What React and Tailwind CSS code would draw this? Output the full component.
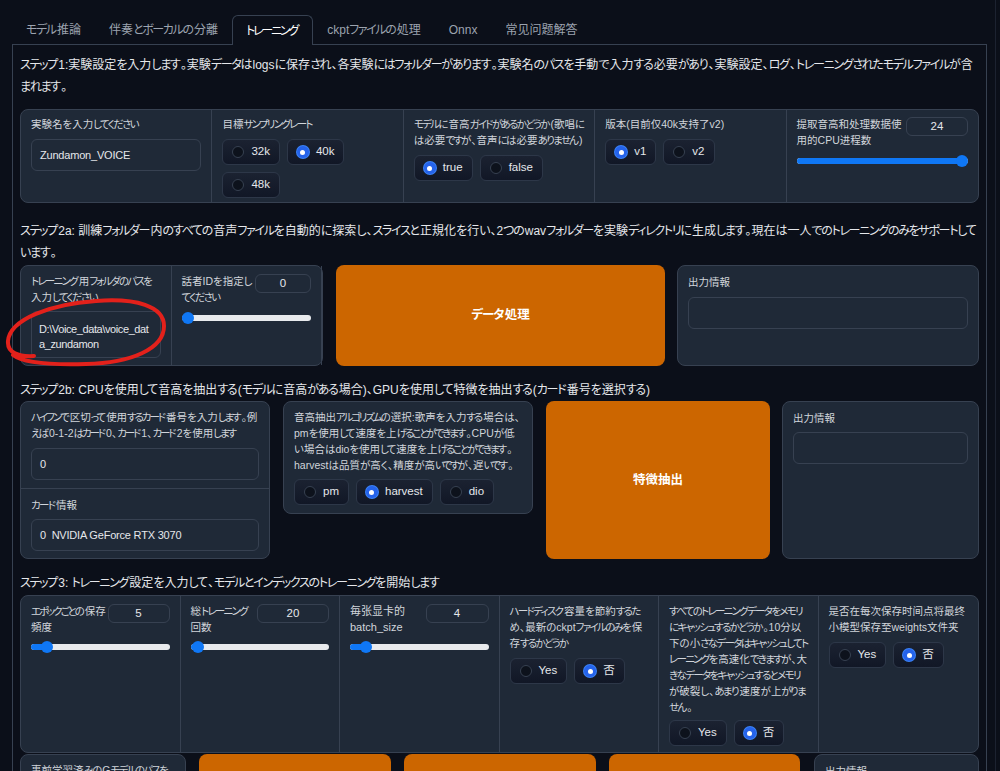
import React from "react";

const TABS = ["モデル推論", "伴奏とボーカルの分離", "トレーニング", "ckptファイルの処理", "Onnx", "常见问题解答"];

// kana runs get tighter spacing, like the narrow kana of the original UI font
const KANA = /([\u3040-\u30ff]+)/;
const jp = (text, cls) =>
  typeof text === "string"
    ? text.split(KANA).map((p, i) => (i % 2 === 1 ? <span key={i} className={cls}>{p}</span> : p))
    : text;

const Label = ({ children, className = "", kana = "tracking-[-1.7px] pr-[1.7px]" }) => (
  <div className={`text-[10.5px] leading-[16px] text-[#d1d5db] ${className}`}>{jp(children, kana)}</div>
);

const TIGHT = "tracking-[-2.1px] pr-[2.1px]";

const Radio = ({ label, checked }) => (
  <div className="flex items-center h-[26px] pl-[9px] pr-[9px] gap-[7px] rounded-[6px] border border-[#2d3748] bg-gradient-to-b from-[#1b2231] to-[#111726] text-[11.5px] text-[#e5e7eb]">
    {checked ? (
      <span className="w-[12px] h-[12px] rounded-full bg-[#2563eb] flex items-center justify-center shadow-[0_0_0_1px_#3b82f6]">
        <span className="w-[5px] h-[5px] rounded-full bg-white" />
      </span>
    ) : (
      <span className="w-[12px] h-[12px] rounded-full bg-[#0d121c] border border-[#374151]" />
    )}
    <span>{label}</span>
  </div>
);

const Slider = ({ pct }) => (
  <div className="relative h-[12px] flex items-center">
    <div className="w-full h-[6px] rounded-full bg-[#e8eaed] overflow-hidden">
      <div className="h-full bg-[#0f77f5]" style={{ width: `calc((100% - 12px) * ${pct / 100} + 6px)` }} />
    </div>
    <div
      className="absolute top-0 w-[12px] h-[12px] rounded-full bg-[#0f77f5]"
      style={{ left: `calc((100% - 12px) * ${pct / 100})` }}
    />
  </div>
);

const NumBox = ({ value, w = "w-[62px]" }) => (
  <div className={`${w} shrink-0 h-[19px] mt-[1px] rounded-[6px] border border-[#374151] text-[11.5px] flex items-center justify-center text-[#e5e7eb]`}>
    {value}
  </div>
);

const TextBox = ({ children, className = "h-[32px]" }) => (
  <div className={`${className} rounded-[6px] border border-[#374151] bg-[#1f2937] px-[8px] flex items-center text-[11px] tracking-[-0.2px] text-[#e5e7eb]`}>
    {children}
  </div>
);

const Panel = ({ children, className = "" }) => (
  <div className={`rounded-[8px] border border-[#374151] bg-[#1f2937] ${className}`}>{children}</div>
);

const OrangeButton = ({ children, className = "" }) => (
  <div className={`rounded-[8px] bg-[#cc6600] flex items-center justify-center text-white font-bold text-[12.5px] ${className}`}>
    {jp(children, "tracking-[-1px] pr-[1px]")}
  </div>
);

const StepText = ({ children, className = "" }) => (
  <div className={`text-[12px] leading-[22px] text-[#e5e7eb] ${className}`}>
    {jp(children, "tracking-[-1.3px] pr-[1.3px]")}
  </div>
);

export default function App() {
  return (
    <div className="min-h-screen w-full bg-[#0b0f19] font-['Liberation_Sans','Noto_Sans_CJK_JP',sans-serif] [font-feature-settings:'palt'] text-[#e5e7eb]">
      <div className="w-[996px] min-h-screen border-r border-[#1c2230] pt-[15px] pl-[12px] pr-[8px]">
        {/* tabs */}
        <div className="flex items-end h-[29px]">
          {TABS.map((t, i) =>
            i === 2 ? (
              <div
                key={t}
                className="relative z-10 -mb-px h-[30px] px-[13px] flex items-center rounded-t-[6px] border border-b-0 border-[#374151] bg-[#0b0f19] text-[12px] text-white"
              >
                {jp(t, "tracking-[-2.2px] pr-[2.2px]")}
              </div>
            ) : (
              <div key={t} className="h-[29px] px-[14px] flex items-center text-[12px] text-[#9ca3af]">
                {jp(t, "tracking-[-1.4px] pr-[1.4px]")}
              </div>
            )
          )}
        </div>

        <div className="border border-[#374151] px-[7px] pt-[9px] pb-[20px]">
          {/* Step 1 */}
          <StepText>
            ステップ1:実験設定を入力します。実験データはlogsに保存され、各実験にはフォルダーがあります。実験名のパスを手動で入力する必要があり、実験設定、ログ、トレーニングされたモデルファイルが含まれます。
          </StepText>
          <Panel className="mt-[11px] h-[94px] grid grid-cols-5 divide-x divide-[#374151]">
            <div className="px-[10px] pt-[6px]">
              <Label>実験名を入力してください</Label>
              <TextBox className="mt-[7px] h-[32px]">Zundamon_VOICE</TextBox>
            </div>
            <div className="px-[10px] pt-[6px]">
              <Label>目標サンプリングレート</Label>
              <div className="mt-[7px] flex flex-wrap gap-[7px]">
                <Radio label="32k" />
                <Radio label="40k" checked />
                <Radio label="48k" />
              </div>
            </div>
            <div className="px-[10px] pt-[6px]">
              <Label>モデルに音高ガイドがあるかどうか(歌唱には必要ですが、音声には必要ありません)</Label>
              <div className="mt-[7px] flex flex-wrap gap-[7px]">
                <Radio label="true" checked />
                <Radio label="false" />
              </div>
            </div>
            <div className="px-[10px] pt-[6px]">
              <Label>版本(目前仅40k支持了v2)</Label>
              <div className="mt-[7px] flex flex-wrap gap-[7px]">
                <Radio label="v1" checked />
                <Radio label="v2" />
              </div>
            </div>
            <div className="px-[10px] pt-[6px]">
              <div className="flex">
                <Label className="flex-1">提取音高和处理数据使用的CPU进程数</Label>
                <NumBox value="24" />
              </div>
              <div className="mt-[7px]">
                <Slider pct={100} />
              </div>
            </div>
          </Panel>

          {/* Step 2a */}
          <StepText className="mt-[17px]">
            ステップ2a: 訓練フォルダー内のすべての音声ファイルを自動的に探索し、スライスと正規化を行い、2つのwavフォルダーを実験ディレクトリに生成します。現在は一人でのトレーニングのみをサポートしています。
          </StepText>
          <div className="mt-[1px] flex h-[101px]">
            <Panel className="relative w-[303px] grid grid-cols-2 divide-x divide-[#374151]">
              <div className="px-[10px] pt-[7px]">
                <Label>トレーニング用フォルダのパスを入力してください</Label>
                <div className="mt-[6px] h-[47px] rounded-[6px] border border-[#374151] px-[7px] pt-[10px] text-[11px] tracking-[-0.4px] leading-[15px] text-[#e5e7eb] break-all">
                  D:\Voice_data\voice_data_zundamon
                </div>
              </div>
              <div className="px-[10px] pt-[7px]">
                <div className="flex gap-[4px]">
                  <Label className="flex-1">話者IDを指定してください</Label>
                  <NumBox value="0" w="w-[56px]" />
                </div>
                <div className="mt-[7px]">
                  <Slider pct={0} />
                </div>
              </div>
              {/* red hand-drawn annotation */}
              <svg
                className="absolute left-[-16px] top-[31px] pointer-events-none"
                width="166"
                height="72"
                viewBox="0 0 166 72"
                fill="none"
              >
                <path
                  d="M29 59 C14 60, 2 56, 3 44 C5 22, 46 7, 91 4 C131 1, 159 9, 159 29 C159 52, 126 66, 81 67 C46 68, 18 66, 8 58"
                  stroke="#e3211b"
                  strokeWidth="4"
                  strokeLinecap="round"
                />
              </svg>
            </Panel>
            <OrangeButton className="ml-[13px] w-[329px]">データ処理</OrangeButton>
            <Panel className="ml-[12px] flex-1 px-[10px] pt-[8px]">
              <Label>出力情報</Label>
              <TextBox className="mt-[7px] h-[32px]" />
            </Panel>
          </div>

          {/* Step 2b */}
          <StepText className="mt-[13px]">
            ステップ2b: CPUを使用して音高を抽出する(モデルに音高がある場合)、GPUを使用して特徴を抽出する(カード番号を選択する)
          </StepText>
          <div className="flex items-start h-[158px]">
            <Panel className="w-[250px] self-stretch">
              <div className="px-[10px] pt-[7px] pb-[8px] border-b border-[#374151]">
                <Label kana={TIGHT}>
                  ハイフンで区切って使用するカード番号を入力します。例えば0-1-2はカード0、カード1、カード2を使用します
                </Label>
                <TextBox className="mt-[7px] h-[32px]">0</TextBox>
              </div>
              <div className="px-[10px] pt-[8px]">
                <Label>カード情報</Label>
                <TextBox className="mt-[6px] h-[32px]">0&nbsp;&nbsp;NVIDIA GeForce RTX 3070</TextBox>
              </div>
            </Panel>
            <Panel className="ml-[13px] w-[250px] px-[10px] pt-[7px] pb-[8px]">
              <Label kana={TIGHT}>
                音高抽出アルゴリズムの選択:歌声を入力する場合は、pmを使用して速度を上げることができます。CPUが低い場合はdioを使用して速度を上げることができます。harvestは品質が高く、精度が高いですが、遅いです。
              </Label>
              <div className="mt-[6px] flex flex-wrap gap-[7px]">
                <Radio label="pm" />
                <Radio label="harvest" checked />
                <Radio label="dio" />
              </div>
            </Panel>
            <OrangeButton className="ml-[13px] w-[224px] self-stretch">特徴抽出</OrangeButton>
            <Panel className="ml-[12px] flex-1 self-stretch px-[10px] pt-[8px]">
              <Label>出力情報</Label>
              <TextBox className="mt-[6px] h-[32px]" />
            </Panel>
          </div>

          {/* Step 3 */}
          <StepText className="mt-[13px]">
            ステップ3: トレーニング設定を入力して、モデルとインデックスのトレーニングを開始します
          </StepText>
          <Panel className="mt-[1px] h-[158px] grid grid-cols-6 divide-x divide-[#374151]">
            <div className="px-[10px] pt-[7px]">
              <div className="flex">
                <Label className="flex-1" kana={TIGHT}>エポックごとの保存頻度</Label>
                <NumBox value="5" w="w-[62px]" />
              </div>
              <div className="mt-[6px]">
                <Slider pct={8} />
              </div>
            </div>
            <div className="px-[10px] pt-[7px]">
              <div className="flex">
                <Label className="flex-1">総トレーニング回数</Label>
                <NumBox value="20" w="w-[72px]" />
              </div>
              <div className="mt-[6px]">
                <Slider pct={1} />
              </div>
            </div>
            <div className="px-[10px] pt-[7px]">
              <div className="flex">
                <Label className="flex-1 text-[11px]">毎张显卡的batch_size</Label>
                <NumBox value="4" w="w-[63px]" />
              </div>
              <div className="mt-[6px]">
                <Slider pct={8} />
              </div>
            </div>
            <div className="px-[10px] pt-[7px]">
              <Label>ハードディスク容量を節約するため、最新のckptファイルのみを保存するかどうか</Label>
              <div className="mt-[7px] flex flex-wrap gap-[7px]">
                <Radio label="Yes" />
                <Radio label="否" checked />
              </div>
            </div>
            <div className="px-[10px] pt-[7px]">
              <Label>
                すべてのトレーニングデータをメモリにキャッシュするかどうか。10分以下の小さなデータはキャッシュしてトレーニングを高速化できますが、大きなデータをキャッシュするとメモリが破裂し、あまり速度が上がりません。
              </Label>
              <div className="mt-[5px] flex flex-wrap gap-[7px]">
                <Radio label="Yes" />
                <Radio label="否" checked />
              </div>
            </div>
            <div className="px-[10px] pt-[7px]">
              <Label>是否在每次保存时间点将最终小模型保存至weights文件夹</Label>
              <div className="mt-[7px] flex flex-wrap gap-[7px]">
                <Radio label="Yes" />
                <Radio label="否" checked />
              </div>
            </div>
          </Panel>

          {/* next row (cut off at the window edge) */}
          <div className="mt-[1px] flex h-[140px]">
            <Panel className="w-[166px] px-[10px] pt-[7px]">
              <Label>事前学習済みのGモデルのパスをロードしてください</Label>
            </Panel>
            <OrangeButton className="ml-[13px] w-[192px]">モデルのトレーニング</OrangeButton>
            <OrangeButton className="ml-[13px] w-[192px]">特徴インデックスのトレーニング</OrangeButton>
            <OrangeButton className="ml-[13px] w-[191px]">ワンクリックトレーニング</OrangeButton>
            <Panel className="ml-[14px] flex-1 px-[10px] pt-[8px]">
              <Label>出力情報</Label>
            </Panel>
          </div>
        </div>
      </div>
    </div>
  );
}
